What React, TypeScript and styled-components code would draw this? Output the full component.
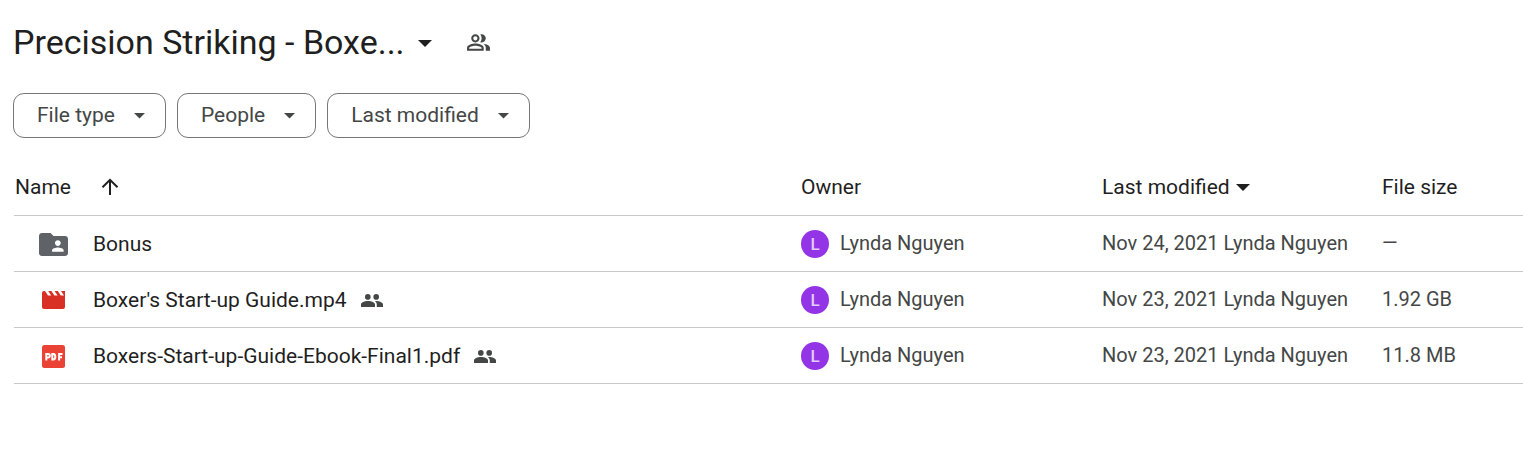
import React from "react";
import styled, { createGlobalStyle } from "styled-components";

const GlobalStyle = createGlobalStyle`
  * { box-sizing: border-box; }
  body {
    margin: 0;
    background: #fff;
    color: #1f1f1f;
    font-family: Roboto, "Liberation Sans", sans-serif;
    font-size: 20px;
    line-height: 28px;
  }
  button { font: inherit; color: inherit; background: none; border: 0; padding: 0; cursor: pointer; }
`;

const Page = styled.main`
  padding: 20px 0 0 13px;
`;

const TitleBar = styled.header`
  display: flex;
  align-items: center;
  gap: 34px;
  height: 44px;
`;

const Title = styled.h1`
  margin: 0;
  font-size: 34px;
  line-height: 42px;
  font-weight: 400;
`;

const TitleButton = styled.button`
  display: flex;
  align-items: center;
  gap: 13px;
`;

const IconButton = styled.button`
  display: flex;
  color: #444746;
`;

const Filters = styled.div`
  display: flex;
  gap: 11px;
  margin-top: 29px;
`;

const Chip = styled.button`
  display: flex;
  align-items: center;
  gap: 19px;
  height: 45px;
  padding: 0 20px 2px 23px;
  border: 1px solid #747775;
  border-radius: 11px;
  color: #444746;
  font-size: 21px;
`;

const TableArea = styled.section`
  margin: 21px 0 0 1px;
`;

const FileTable = styled.table`
  width: 100%;
  table-layout: fixed;
  border-collapse: collapse;
`;

const Col = styled.col<{ $width?: number }>`
  width: ${(p) => (p.$width ? `${p.$width}px` : "auto")};
`;

const Row = styled.tr`
  height: 56px;
  border-bottom: 1px solid #c7c7c7;
`;

const HeadCell = styled.th`
  padding: 0 0 0 1px;
  text-align: left;
  font-size: 21px;
  font-weight: 400;
  white-space: nowrap;
`;

const SortButton = styled.button<{ $gap: number }>`
  display: flex;
  align-items: center;
  gap: ${(p) => p.$gap}px;
`;

const Cell = styled.td`
  padding: 0 0 0 1px;
  color: #444746;
  white-space: nowrap;
`;

const NameCell = styled(Cell)`
  padding-top: 2px;
  color: #1f1f1f;
  font-size: 21px;
`;

const OwnerCell = styled(Cell)`
  padding-top: 2px;
`;

const FileName = styled.div`
  display: flex;
  align-items: center;
  padding-left: 24px;
`;

const FileIcon = styled.span`
  display: flex;
  justify-content: center;
  width: 29px;
  margin-right: 25px;
`;

const SharedMark = styled.span`
  display: flex;
  margin-left: 14px;
`;

const Owner = styled.div`
  display: flex;
  align-items: flex-start;
  gap: 11px;
  line-height: 26px;
`;

const Avatar = styled.span`
  display: grid;
  place-items: center;
  width: 28px;
  height: 28px;
  border-radius: 50%;
  background: #9334e6;
  color: #e4ccf9;
  font-size: 17px;
  font-weight: 500;
`;

const Caret = ({ width = 14, height = 9 }: { width?: number; height?: number }) => (
  <svg width={width} height={height} viewBox="0 0 14 9" aria-hidden="true">
    <path d="M0 2h14L7 9z" fill="currentColor" />
  </svg>
);

const ArrowUp = () => (
  <svg width="18" height="18" viewBox="0 0 18 18" fill="none" stroke="#1f1f1f" strokeWidth="2" aria-hidden="true">
    <path d="M9 17V2M1.5 9.3 9 1.8l7.500 7.500" />
  </svg>
);

const PeopleOutline = () => (
  <svg width="25" height="25" viewBox="0 0 24 24" fill="currentColor" aria-hidden="true">
    <path d="M16.670 13.130C18.040 14.060 19 15.320 19 17v3h4v-3c0-2.180-3.570-3.470-6.330-3.870zM15 12c2.210 0 4-1.790 4-4s-1.790-4-4-4c-.47 0-.91.1-1.330.24C14.500 5.270 15 6.580 15 8s-.5 2.730-1.330 3.760c.42.14.86.24 1.330.24zM9 12c2.210 0 4-1.790 4-4s-1.790-4-4-4-4 1.790-4 4 1.790 4 4 4zm0-6c1.100 0 2 .9 2 2s-.9 2-2 2-2-.9-2-2 .9-2 2-2zM9 13c-2.670 0-8 1.340-8 4v3h16v-3c0-2.660-5.330-4-8-4zm6 5H3v-.99C3.200 16.290 6.300 15 9 15s5.800 1.290 6 2v1z" />
  </svg>
);

const PeopleFilled = () => (
  <svg width="22" height="13" viewBox="0 0 22 13" fill="#444746" role="img" aria-label="Shared">
    <circle cx="6.800" cy="2.900" r="2.800" />
    <circle cx="15.200" cy="2.900" r="2.800" />
    <path d="M0 13v-2.400C0 8.200 3.600 7 7 7s7 1.200 7 3.600V13zM15.800 13v-2.400c0-1.500-.8-2.600-2-3.500 3.700-.3 8.200 1 8.200 3.500V13z" />
  </svg>
);

const FolderShared = () => (
  <svg width="29" height="23" viewBox="2 4 20 16" preserveAspectRatio="none" aria-hidden="true">
    <path
      fill="#5f6368"
      d="M20 6h-8l-2-2H4c-1.100 0-1.990.9-1.990 2L2 18c0 1.100.9 2 2 2h16c1.100 0 2-.9 2-2V8c0-1.100-.9-2-2-2zm-5 3c1.100 0 2 .9 2 2s-.9 2-2 2-2-.9-2-2 .9-2 2-2zm4 8h-8v-1c0-1.330 2.670-2 4-2s4 .67 4 2v1z"
    />
  </svg>
);

const VideoFile = () => (
  <svg width="23" height="18" viewBox="0 0 23 18" aria-hidden="true">
    <path
      fill="#d93025"
      d="M2 0h1l3 4.500h3.200L6.200 0h3.200l3 4.500h3.200L12.600 0h3.200l3 4.500H22L19 0h4v16a2 2 0 0 1-2 2H2a2 2 0 0 1-2-2V2a2 2 0 0 1 2-2z"
    />
  </svg>
);

const PdfFile = () => (
  <svg width="23" height="23" viewBox="0 0 23 23" aria-hidden="true">
    <rect width="23" height="23" rx="2.500" fill="#ea4335" />
    <g fill="none" stroke="#fff" strokeWidth="2">
      <path d="M4.300 15.500V9h1.800a1.600 1.600 0 0 1 0 3.500H4.300" />
      <path d="M10.300 9v5.500h1.100c1.300 0 1.900-.8 1.900-2.700S12.700 9 11.400 9z" />
      <path d="M17.100 15.500V9h3.400M17.100 12.200h2.900" />
    </g>
  </svg>
);

const files = [
  { name: "Bonus", icon: <FolderShared />, shared: false, modified: "Nov 24, 2021", size: "—" },
  { name: "Boxer's Start-up Guide.mp4", icon: <VideoFile />, shared: true, modified: "Nov 23, 2021", size: "1.92 GB" },
  { name: "Boxers-Start-up-Guide-Ebook-Final1.pdf", icon: <PdfFile />, shared: true, modified: "Nov 23, 2021", size: "11.8 MB" },
];

const owner = "Lynda Nguyen";

export default function App() {
  return (
    <>
      <GlobalStyle />
      <Page>
        <TitleBar>
          <TitleButton>
            <Title>Precision Striking - Boxe...</Title>
            <Caret />
          </TitleButton>
          <IconButton aria-label="Manage access">
            <PeopleOutline />
          </IconButton>
        </TitleBar>
        <Filters>
          {["File type", "People", "Last modified"].map((label) => (
            <Chip key={label}>
              {label}
              <Caret width={11} height={8} />
            </Chip>
          ))}
        </Filters>
        <TableArea>
          <FileTable>
            <colgroup>
              <Col />
              <Col $width={301} />
              <Col $width={280} />
              <Col $width={142} />
            </colgroup>
            <thead>
              <Row>
                <HeadCell>
                  <SortButton $gap={30}>
                    Name
                    <ArrowUp />
                  </SortButton>
                </HeadCell>
                <HeadCell>Owner</HeadCell>
                <HeadCell>
                  <SortButton $gap={6}>
                    Last modified
                    <Caret />
                  </SortButton>
                </HeadCell>
                <HeadCell>File size</HeadCell>
              </Row>
            </thead>
            <tbody>
              {files.map((file) => (
                <Row key={file.name}>
                  <NameCell>
                    <FileName>
                      <FileIcon>{file.icon}</FileIcon>
                      {file.name}
                      {file.shared && (
                        <SharedMark>
                          <PeopleFilled />
                        </SharedMark>
                      )}
                    </FileName>
                  </NameCell>
                  <OwnerCell>
                    <Owner>
                      <Avatar aria-hidden="true">{owner[0]}</Avatar>
                      {owner}
                    </Owner>
                  </OwnerCell>
                  <Cell>
                    {file.modified} {owner}
                  </Cell>
                  <Cell>{file.size}</Cell>
                </Row>
              ))}
            </tbody>
          </FileTable>
        </TableArea>
      </Page>
    </>
  );
}
